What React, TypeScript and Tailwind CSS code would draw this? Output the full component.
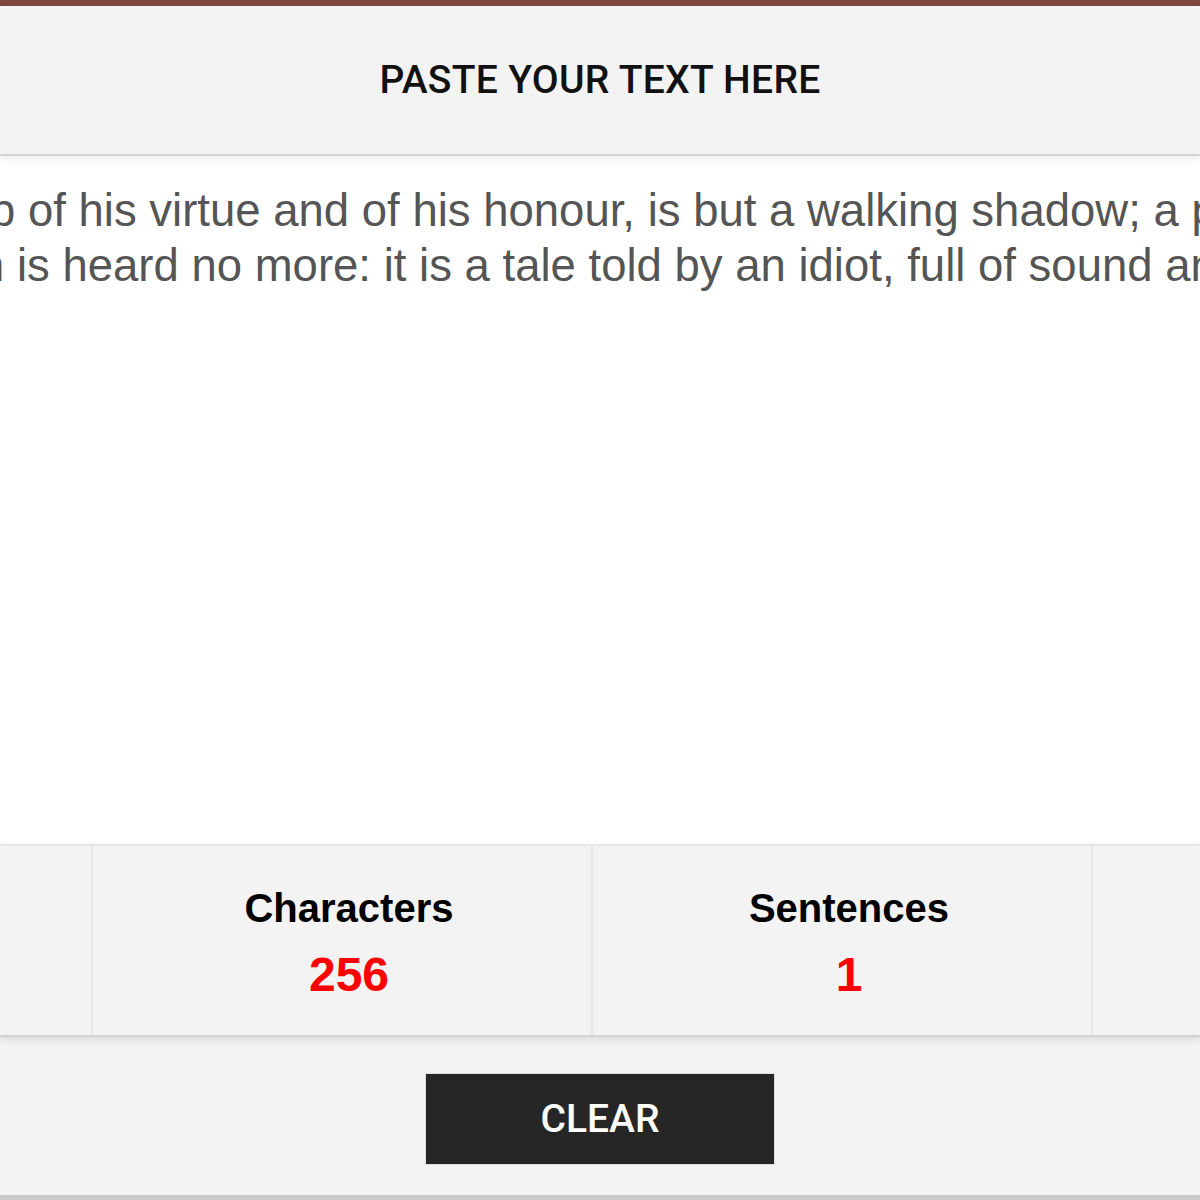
import { useState } from "react";

const LINES = [
  { text: "p of his virtue and of his honour, is but a walking shadow; a p", shift: "-ml-[10px]" },
  { text: "n is heard no more: it is a tale told by an idiot, full of sound an", shift: "-ml-[21px]" },
];

function Stat({ label, value }: { label?: string; value?: number }) {
  return (
    <div className="flex h-full w-[500px] shrink-0 flex-col items-center border-r-2 border-[#e6e6e6] pl-[14px] pt-[39px]">
      {label ? (
        <>
          <div className="text-[40px] font-bold leading-[46px] text-black">{label}</div>
          <div className="mt-[16px] text-[48px] font-bold leading-[55px] text-[#ff0000]">{value}</div>
        </>
      ) : null}
    </div>
  );
}

export default function App() {
  const [text, setText] = useState(LINES);

  return (
    <div className="h-[1200px] w-[1200px] overflow-hidden bg-[#f3f3f3] font-['Liberation_Sans',Arial,sans-serif]">
      <div className="h-[6px] bg-[#7e4740]" />

      <div className="relative z-10 flex h-[150px] items-center justify-center border-b-2 border-[#d4d4d4] bg-[#f3f3f3] shadow-[0_3px_8px_rgba(0,0,0,0.08)]">
        <h1 className="font-['Roboto',sans-serif] text-[39px] font-medium tracking-[0.3px] text-[#111]">
          PASTE YOUR TEXT HERE
        </h1>
      </div>

      <div className="h-[688px] overflow-hidden bg-white pt-[27px] text-[45.5px] leading-[55px] text-[#555]">
        {text.map((l) => (
          <div key={l.text} className={`whitespace-nowrap ${l.shift}`}>
            {l.text}
          </div>
        ))}
      </div>

      <div className="relative z-10 h-[193px] overflow-hidden border-t-2 border-b-2 border-[#e6e6e6] border-b-[#d2d2d2] bg-[#f3f3f3] shadow-[0_3px_8px_rgba(0,0,0,0.1)]">
        <div className="-ml-[407px] flex h-full">
          <Stat />
          <Stat label="Characters" value={256} />
          <Stat label="Sentences" value={1} />
          <Stat />
        </div>
      </div>

      <div className="flex h-[158px] items-start justify-center pt-[36px]">
        <button
          onClick={() => setText([])}
          className="flex h-[92px] w-[350px] items-center justify-center border border-[#dcdcdc] bg-[#262626] font-['Roboto',sans-serif] text-[39px] font-medium text-white"
        >
          CLEAR
        </button>
      </div>

      <div className="h-[6px] bg-[#c9c9c9]" />
    </div>
  );
}
